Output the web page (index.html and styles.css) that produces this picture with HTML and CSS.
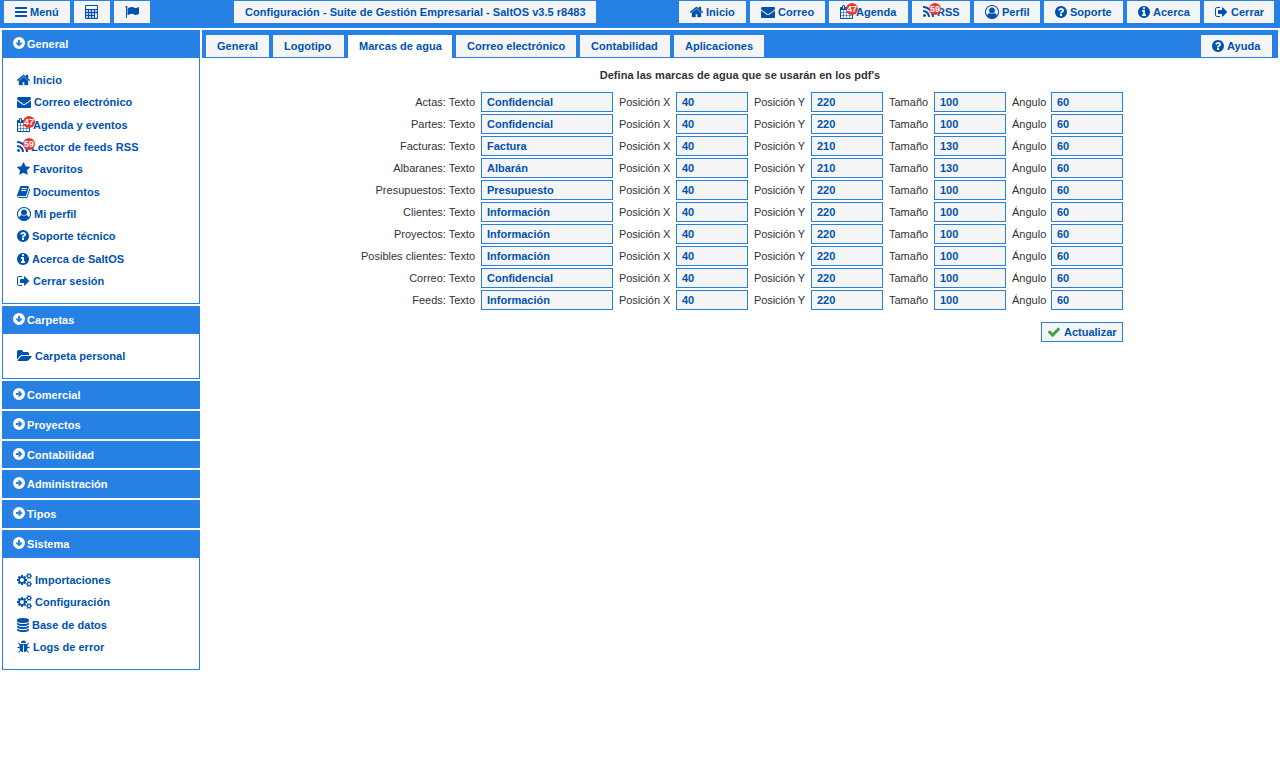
FILE: index.html
```html
<!DOCTYPE html>
<html lang="es">
<head>
<meta charset="utf-8">
<title>Configuración - SaltOS</title>
<link rel="stylesheet" href="styles.css">
</head>
<body>
<svg class="sprite" aria-hidden="true">
<symbol id="bars" viewBox="128 0 1536 1792"><path d="M1664 1344v128q0 26-19 45t-45 19h-1408q-26 0-45-19t-19-45v-128q0-26 19-45t45-19h1408q26 0 45 19t19 45zm0-512v128q0 26-19 45t-45 19h-1408q-26 0-45-19t-19-45v-128q0-26 19-45t45-19h1408q26 0 45 19t19 45zm0-512v128q0 26-19 45t-45 19h-1408q-26 0-45-19t-19-45v-128q0-26 19-45t45-19h1408q26 0 45 19t19 45z"/></symbol>
<symbol id="calc" viewBox="64 0 1664 1792"><path fill-rule="evenodd" d="M192 0h1408q52 0 90 38t38 90v1536q0 52-38 90t-90 38h-1408q-52 0-90-38t-38-90v-1536q0-52 38-90t90-38zM256 128h1280q26 0 45 19t19 45v256q0 26-19 45t-45 19h-1280q-26 0-45-19t-19-45v-256q0-26 19-45t45-19zM192 768a128 128 0 1 0 256 0a128 128 0 1 0-256 0zm384 0a128 128 0 1 0 256 0a128 128 0 1 0-256 0zm384 0a128 128 0 1 0 256 0a128 128 0 1 0-256 0zm384 0a128 128 0 1 0 256 0a128 128 0 1 0-256 0zM192 1152a128 128 0 1 0 256 0a128 128 0 1 0-256 0zm384 0a128 128 0 1 0 256 0a128 128 0 1 0-256 0zm384 0a128 128 0 1 0 256 0a128 128 0 1 0-256 0zM192 1536a128 128 0 1 0 256 0a128 128 0 1 0-256 0zm384 0a128 128 0 1 0 256 0a128 128 0 1 0-256 0zm384 0a128 128 0 1 0 256 0a128 128 0 1 0-256 0zM1344 1152a128 128 0 0 1 256 0v384a128 128 0 0 1-256 0z"/></symbol>
<symbol id="flag" viewBox="0 0 1792 1792"><path d="M320 256q0 72-64 110v1266q0 13-9.5 22.5t-22.5 9.5h-64q-13 0-22.5-9.5t-9.5-22.5v-1266q-64-38-64-110 0-53 37.5-90.5t90.5-37.5 90.5 37.5 37.5 90.5zm1472 64v763q0 25-12.5 38.5t-39.5 27.5q-215 116-369 116-61 0-123.5-22t-108.5-48-115.5-48-142.5-22q-192 0-464 146-17 9-33 9-26 0-45-19t-19-45v-742q0-32 31-55 21-14 79-43 236-120 421-120 107 0 200 29t219 88q38 19 88 19 54 0 117.5-21t110-47 88-47 54.5-21q26 0 45 19t19 45z"/></symbol>
<symbol id="home" viewBox="64 0 1664 1792"><path stroke="currentColor" stroke-width="50" d="M1472 992v480q0 26-19 45t-45 19h-384v-384h-256v384h-384q-26 0-45-19t-19-45v-480q0-1 .5-3t.5-3l575-474 575 474q1 2 1 6zm223-69l-62 74q-8 9-21 11h-3q-13 0-21-7l-692-577-692 577q-12 8-24 7-13-2-21-11l-62-74q-8-10-7-23.5t11-21.5l719-599q32-26 76-26t76 26l244 204v-195q0-14 9-23t23-9h192q14 0 23 9t9 23v408l219 182q10 8 11 21.5t-7 23.5z"/></symbol>
<symbol id="mail" viewBox="0 0 1792 1792"><path d="M1792 710v794q0 66-47 113t-113 47h-1472q-66 0-113-47t-47-113v-794q44 49 101 87 362 246 497 345 57 42 92.5 65.5t94.5 48 110 24.5h2q51 0 110-24.5t94.5-48 92.5-65.5q170-123 498-345 57-39 100-87zm0-294q0 79-49 151t-122 123q-376 261-468 325-10 7-42.5 31t-54 38.5-52 32.5-57.5 27-50 9h-2q-23 0-50-9t-57.5-27-52-32.5-54-38.5-42.5-31q-91-64-262-182.5t-205-142.5q-62-42-117-115.5t-55-136.5q0-78 41.5-130t118.5-52h1472q65 0 112.5 47t47.5 113z"/></symbol>
<symbol id="cal" viewBox="64 0 1664 1792"><path d="M192 1664h288v-288h-288v288zm352 0h320v-288h-320v288zm-352-352h288v-320h-288v320zm352 0h320v-320h-320v320zm-352-384h288v-288h-288v288zm736 736h320v-288h-320v288zm-384-736h320v-288h-320v288zm768 736h288v-288h-288v288zm-384-352h320v-320h-320v320zm-352-864v-288q0-13-9.5-22.5t-22.5-9.5h-64q-13 0-22.5 9.5t-9.5 22.5v288q0 13 9.5 22.5t22.5 9.5h64q13 0 22.5-9.5t9.5-22.5zm736 864h288v-320h-288v320zm-384-384h320v-288h-320v288zm384 0h288v-288h-288v288zm32-480v-288q0-13-9.5-22.5t-22.5-9.5h-64q-13 0-22.5 9.5t-9.5 22.5v288q0 13 9.5 22.5t22.5 9.5h64q13 0 22.5-9.5t9.5-22.5zm384-64v1280q0 52-38 90t-90 38h-1408q-52 0-90-38t-38-90v-1280q0-52 38-90t90-38h128v-96q0-66 47-113t113-47h64q66 0 113 47t47 113v96h384v-96q0-66 47-113t113-47h64q66 0 113 47t47 113v96h128q52 0 90 38t38 90z"/></symbol>
<symbol id="rss" viewBox="192 0 1408 1792"><path d="M576 1344q0 80-56 136t-136 56-136-56-56-136 56-136 136-56 136 56 56 136zm512 123q2 28-17 48-18 21-47 21h-135q-25 0-43-16.5t-20-41.5q-22-229-184.5-391.5t-391.5-184.5q-25-2-41.5-20t-16.5-43v-135q0-29 21-47 17-17 43-17h5q160 13 306 80.5t259 181.5q114 113 181.5 259t80.5 306zm512 2q2 27-18 47-18 20-46 20h-143q-26 0-44.5-17.5t-19.5-42.5q-12-215-101-408.5t-231.5-336-336-231.5-408.5-102q-25-1-42.5-19.5t-17.5-43.5v-143q0-28 20-46 18-18 44-18h3q262 13 501.5 120t425.5 294q187 186 294 425.5t120 501.5z"/></symbol>
<symbol id="star" viewBox="64 0 1664 1792"><path d="M1728 647q0 22-26 48l-363 354 86 500q1 7 1 20 0 21-10.5 35.5t-30.5 14.5q-19 0-40-12l-449-236-449 236q-22 12-40 12-21 0-31.5-14.5t-10.5-35.5q0-6 2-20l86-500-364-354q-25-27-25-48 0-37 56-46l502-73 225-455q19-41 49-41t49 41l225 455 502 73q56 9 56 46z"/></symbol>
<symbol id="book" viewBox="64 0 1664 1792"><path d="M1703 478q40 57 18 129l-275 906q-19 64-76.5 107.5t-122.5 43.5h-923q-77 0-148.5-53.5t-99.5-131.5q-24-67-2-127 0-4 3-27t4-37q1-8-3-21.5t-3-19.5q2-11 8-21t16.5-23.5 16.5-23.5q23-38 45-91.5t30-91.5q3-10 .5-30t-.5-28q3-11 17-28t17-23q21-36 42-92t25-90q1-9-2.5-32t.5-28q4-13 22-30.5t22-22.5q19-26 42.5-84.5t27.5-96.5q1-8-3-25.5t-2-26.5q2-8 9-18t18-23 17-21q8-12 16.5-30.5t15-35 16-36 19.5-32 26.5-23.5 36-11.5 47.5 5.5l-1 3q38-9 51-9h761q74 0 114 56t18 130l-274 906q-36 119-71.5 153.5t-128.5 34.5h-869q-27 0-38 15-11 16-1 43 24 70 144 70h923q29 0 56-15.5t35-41.5l300-987q7-22 5-57 38 15 59 43zm-1064 2q-4 13 2 22.5t20 9.5h608q13 0 25.5-9.5t16.5-22.5l21-64q4-13-2-22.5t-20-9.5h-608q-13 0-25.5 9.5t-16.5 22.5zm-83 256q-4 13 2 22.5t20 9.5h608q13 0 25.5-9.5t16.5-22.5l21-64q4-13-2-22.5t-20-9.5h-608q-13 0-25.5 9.5t-16.5 22.5z"/></symbol>
<symbol id="user" viewBox="0 0 1792 1792"><path d="M896 0q182 0 348 71t286 191 191 286 71 348q0 181-70.5 347t-190.5 286-286 191.5-349 71.5-349-71-285.5-191.5-190.5-286-71-347.5 71-348 191-286 286-191 348-71zm619 1351q149-205 149-455 0-156-61-298t-164-245-245-164-298-61-298 61-245 164-164 245-61 298q0 250 149 455 66-327 306-327 131 128 313 128t313-128q240 0 306 327zm-235-647q0-159-112.5-271.5t-271.5-112.5-271.5 112.5-112.5 271.5 112.5 271.5 271.5 112.5 271.5-112.5 112.5-271.5z"/></symbol>
<symbol id="help" viewBox="128 0 1536 1792"><path d="M1024 1376v-192q0-14-9-23t-23-9h-192q-14 0-23 9t-9 23v192q0 14 9 23t23 9h192q14 0 23-9t9-23zm256-672q0-88-55.5-163t-138.5-116-170-41q-243 0-371 213-15 24 8 42l132 100q7 6 19 6 16 0 25-12 53-68 86-92 34-24 86-24 48 0 85.5 26t37.5 59q0 38-20 61t-68 45q-63 28-115.5 86.5t-52.5 125.5v36q0 14 9 23t23 9h192q14 0 23-9t9-23q0-19 21.5-49.5t54.5-49.5q32-18 49-28.5t46-35 44.5-48 28-60.5 12.5-81zm384 192q0 209-103 385.5t-279.5 279.5-385.5 103-385.5-103-279.5-279.5-103-385.5 103-385.5 279.5-279.5 385.5-103 385.5 103 279.5 279.5 103 385.5z"/></symbol>
<symbol id="info" viewBox="128 0 1536 1792"><path d="M1152 1376v-160q0-14-9-23t-23-9h-96v-512q0-14-9-23t-23-9h-320q-14 0-23 9t-9 23v160q0 14 9 23t23 9h96v320h-96q-14 0-23 9t-9 23v160q0 14 9 23t23 9h448q14 0 23-9t9-23zm-128-896v-160q0-14-9-23t-23-9h-192q-14 0-23 9t-9 23v160q0 14 9 23t23 9h192q14 0 23-9t9-23zm640 416q0 209-103 385.5t-279.5 279.5-385.5 103-385.5-103-279.5-279.5-103-385.5 103-385.5 279.5-279.5 385.5-103 385.5 103 279.5 279.5 103 385.5z"/></symbol>
<symbol id="out" viewBox="64 0 1664 1792"><path d="M704 1440q0 4 1 20t.5 26.5-3 23.5-10 19.5-20.5 6.5h-320q-119 0-203.5-84.5t-84.5-203.5v-704q0-119 84.5-203.5t203.5-84.5h320q13 0 22.5 9.5t9.5 22.5q0 4 1 20t.5 26.5-3 23.5-10 19.5-20.5 6.5h-320q-66 0-113 47t-47 113v704q0 66 47 113t113 47h312l11.5 1 11.5 3 8 5.5 7 9 2 13.5zm928-544q0 26-19 45l-544 544q-19 19-45 19t-45-19-19-45v-288h-448q-26 0-45-19t-19-45v-384q0-26 19-45t45-19h448v-288q0-26 19-45t45-19 45 19l544 544q19 19 19 45z"/></symbol>
<symbol id="folder" viewBox="-64 0 1920 1792"><path d="M1815 952q0 31-31 66l-336 396q-43 51-120.5 86.5t-143.5 35.5h-1088q-34 0-60.5-13t-26.5-43q0-31 31-66l336-396q43-51 120.5-86.5t143.5-35.5h1088q34 0 60.5 13t26.5 43zm-343-344v160h-832q-94 0-197 47.5t-164 119.5l-337 396-5 6q0-4-.5-12.5t-.5-12.5v-960q0-92 66-158t158-66h320q92 0 158 66t66 158v32h544q92 0 158 66t66 158z"/></symbol>
<symbol id="down" viewBox="128 0 1536 1792"><path fill-rule="evenodd" d="M128 896a768 768 0 1 0 1536 0a768 768 0 1 0-1536 0zM768 512h256v320h256v128l-384 384l-384-384v-128h256z"/></symbol>
<symbol id="right" viewBox="128 0 1536 1792"><path fill-rule="evenodd" d="M128 896a768 768 0 1 0 1536 0a768 768 0 1 0-1536 0zM512 768v256h320v256h128l384-384l-384-384h-128v256z"/></symbol>
<symbol id="cogs" viewBox="-64 0 1920 1792"><path d="M832 896q0-106-75-181t-181-75-181 75-75 181 75 181 181 75 181-75 75-181zm768 512q0-52-38-90t-90-38-90 38-38 90q0 53 37.5 90.5t90.5 37.5 90.5-37.5 37.5-90.5zm0-1024q0-52-38-90t-90-38-90 38-38 90q0 53 37.5 90.5t90.5 37.5 90.5-37.5 37.5-90.5zm-384 421v185q0 10-7 19.5t-16 10.5l-155 24q-11 35-32 76 34 48 90 115 7 11 7 20 0 12-7 19-23 30-82.5 89.5t-78.5 59.5q-11 0-21-7l-115-90q-37 19-77 31-11 108-23 155-7 24-30 24h-186q-11 0-20-7.5t-10-17.5l-23-153q-34-10-75-31l-118 89q-7 7-20 7-11 0-21-8-144-133-144-160 0-9 7-19 10-14 41-53t47-61q-23-44-35-82l-152-24q-10-1-17-9.5t-7-19.5v-185q0-10 7-19.5t16-10.5l155-24q11-35 32-76-34-48-90-115-7-11-7-20 0-12 7-20 22-30 82-89t79-59q11 0 21 7l115 90q34-18 77-32 11-108 23-154 7-24 30-24h186q11 0 20 7.5t10 17.5l23 153q34 10 75 31l118-89q8-7 20-7 11 0 21 8 144 133 144 160 0 8-7 19-12 16-42 54t-45 60q23 48 34 82l152 23q10 2 17 10.5t7 19.5zm640 533v140q0 16-149 31-12 27-30 52 51 113 51 138 0 4-4 7-122 71-124 71-8 0-46-47t-52-68q-20 2-30 2t-30-2q-14 21-52 68t-46 47q-2 0-124-71-4-3-4-7 0-25 51-138-18-25-30-52-149-15-149-31v-140q0-16 149-31 13-29 30-52-51-113-51-138 0-4 4-7 4-2 35-20t59-34 30-16q8 0 46 46.5t52 67.5q20-2 30-2t30 2q51-71 92-112l6-2q4 0 124 70 4 3 4 7 0 25-51 138 17 23 30 52 149 15 149 31zm0-1024v140q0 16-149 31-12 27-30 52 51 113 51 138 0 4-4 7-122 71-124 71-8 0-46-47t-52-68q-20 2-30 2t-30-2q-14 21-52 68t-46 47q-2 0-124-71-4-3-4-7 0-25 51-138-18-25-30-52-149-15-149-31v-140q0-16 149-31 13-29 30-52-51-113-51-138 0-4 4-7 4-2 35-20t59-34 30-16q8 0 46 46.5t52 67.5q20-2 30-2t30 2q51-71 92-112l6-2q4 0 124 70 4 3 4 7 0 25-51 138 17 23 30 52 149 15 149 31z"/></symbol>
<symbol id="db" viewBox="128 0 1536 1792"><path d="M896 768q237 0 443-43t325-127v170q0 69-103 128t-280 93.5-385 34.5-385-34.5-280-93.5-103-128v-170q119 84 325 127t443 43zm0 768q237 0 443-43t325-127v170q0 69-103 128t-280 93.5-385 34.5-385-34.5-280-93.5-103-128v-170q119 84 325 127t443 43zm0-384q237 0 443-43t325-127v170q0 69-103 128t-280 93.5-385 34.5-385-34.5-280-93.5-103-128v-170q119 84 325 127t443 43zm0-1152q208 0 385 34.5t280 93.5 103 128v128q0 69-103 128t-280 93.5-385 34.5-385-34.5-280-93.5-103-128v-128q0-69 103-128t280-93.5 385-34.5z"/></symbol>
<symbol id="bug" viewBox="64 0 1664 1792"><path d="M1696 960q0 26-19 45t-45 19h-224q0 171-67 290l208 209q19 19 19 45t-19 45q-18 19-45 19t-45-19l-198-197q-5 5-15 13t-42 28.5-65 36.5-82 29-97 13v-896h-128v896q-51 0-101.5-13.5t-87-33-66-39-43.5-32.5l-15-14-183 207q-20 21-48 21-24 0-43-16-19-18-20.5-44.5t15.5-46.5l202-227q-58-114-58-274h-224q-26 0-45-19t-19-45 19-45 45-19h224v-294l-173-173q-19-19-19-45t19-45 45-19 45 19l173 173h844l173-173q19-19 45-19t45 19 19 45-19 45l-173 173v294h224q26 0 45 19t19 45zm-480-576h-640q0-133 93.5-226.5t226.5-93.5 226.5 93.5 93.5 226.5z"/></symbol>
<symbol id="check" viewBox="0 0 1792 1792"><path d="M1671 566q0 40-28 68l-724 724-136 136q-28 28-68 28t-68-28l-136-136-362-362q-28-28-28-68t28-68l136-136q28-28 68-28t68 28l294 295 656-657q28-28 68-28t68 28l136 136q28 28 28 68z"/></symbol>
</svg>

<header class="topbar">
  <a class="btn b66"><svg class="ic w12"><use href="#bars"/></svg>Menú</a>
  <a class="btn b36"><svg class="ic w13"><use href="#calc"/></svg></a>
  <a class="btn b36"><svg class="ic w14"><use href="#flag"/></svg></a>
  <a class="btn title">Configuración - Suite de Gestión Empresarial - SaltOS v3.5 r8483</a>
  <a class="btn push b67"><svg class="ic w13"><use href="#home"/></svg>Inicio</a>
  <a class="btn b75"><svg class="ic w14"><use href="#mail"/></svg>Correo</a>
  <a class="btn b79"><span class="has"><svg class="ic w13"><use href="#cal"/></svg><b class="badge">47</b></span>Agenda</a>
  <a class="btn b58"><span class="has"><svg class="ic w11"><use href="#rss"/></svg><b class="badge">59</b></span>RSS</a>
  <a class="btn b66"><svg class="ic w14"><use href="#user"/></svg>Perfil</a>
  <a class="btn b79"><svg class="ic w12"><use href="#help"/></svg>Soporte</a>
  <a class="btn b73"><svg class="ic w12"><use href="#info"/></svg>Acerca</a>
  <a class="btn b70"><svg class="ic w13"><use href="#out"/></svg>Cerrar</a>
</header>

<div class="page">
<nav class="side">
  <h3 class="head"><svg class="ic w12"><use href="#down"/></svg>General</h3>
  <ul class="menu">
    <li><svg class="ic w13"><use href="#home"/></svg>Inicio</li>
    <li><svg class="ic w14"><use href="#mail"/></svg>Correo electrónico</li>
    <li><span class="has"><svg class="ic w13"><use href="#cal"/></svg><b class="badge">47</b></span>Agenda y eventos</li>
    <li><span class="has"><svg class="ic w11"><use href="#rss"/></svg><b class="badge">59</b></span>Lector de feeds RSS</li>
    <li><svg class="ic w13"><use href="#star"/></svg>Favoritos</li>
    <li><svg class="ic w13"><use href="#book"/></svg>Documentos</li>
    <li><svg class="ic w14"><use href="#user"/></svg>Mi perfil</li>
    <li><svg class="ic w12"><use href="#help"/></svg>Soporte técnico</li>
    <li><svg class="ic w12"><use href="#info"/></svg>Acerca de SaltOS</li>
    <li><svg class="ic w13"><use href="#out"/></svg>Cerrar sesión</li>
  </ul>
  <h3 class="head"><svg class="ic w12"><use href="#down"/></svg>Carpetas</h3>
  <ul class="menu">
    <li><svg class="ic w15"><use href="#folder"/></svg>Carpeta personal</li>
  </ul>
  <h3 class="head closed"><svg class="ic w12"><use href="#right"/></svg>Comercial</h3>
  <h3 class="head closed"><svg class="ic w12"><use href="#right"/></svg>Proyectos</h3>
  <h3 class="head closed"><svg class="ic w12"><use href="#right"/></svg>Contabilidad</h3>
  <h3 class="head closed"><svg class="ic w12"><use href="#right"/></svg>Administración</h3>
  <h3 class="head closed"><svg class="ic w12"><use href="#right"/></svg>Tipos</h3>
  <h3 class="head"><svg class="ic w12"><use href="#down"/></svg>Sistema</h3>
  <ul class="menu">
    <li><svg class="ic w15"><use href="#cogs"/></svg>Importaciones</li>
    <li><svg class="ic w15"><use href="#cogs"/></svg>Configuración</li>
    <li><svg class="ic w12"><use href="#db"/></svg>Base de datos</li>
    <li><svg class="ic w13"><use href="#bug"/></svg>Logs de error</li>
  </ul>
</nav>

<main class="main">
  <div class="tabs">
    <a class="btn b63">General</a>
    <a class="btn b71">Logotipo</a>
    <a class="btn b104 active">Marcas de agua</a>
    <a class="btn b120">Correo electrónico</a>
    <a class="btn b90">Contabilidad</a>
    <a class="btn b90">Aplicaciones</a>
    <a class="btn b71 push"><svg class="ic w12"><use href="#help"/></svg>Ayuda</a>
  </div>
  <h2 class="caption">Defina las marcas de agua que se usarán en los pdf's</h2>
  <form class="form">
    <label>Actas: Texto</label><input value="Confidencial"><label class="pos">Posición X</label><input value="40"><label class="pos">Posición Y</label><input value="220"><label>Tamaño</label><input value="100"><label>Ángulo</label><input value="60">
    <label>Partes: Texto</label><input value="Confidencial"><label class="pos">Posición X</label><input value="40"><label class="pos">Posición Y</label><input value="220"><label>Tamaño</label><input value="100"><label>Ángulo</label><input value="60">
    <label>Facturas: Texto</label><input value="Factura"><label class="pos">Posición X</label><input value="40"><label class="pos">Posición Y</label><input value="210"><label>Tamaño</label><input value="130"><label>Ángulo</label><input value="60">
    <label>Albaranes: Texto</label><input value="Albarán"><label class="pos">Posición X</label><input value="40"><label class="pos">Posición Y</label><input value="210"><label>Tamaño</label><input value="130"><label>Ángulo</label><input value="60">
    <label>Presupuestos: Texto</label><input value="Presupuesto"><label class="pos">Posición X</label><input value="40"><label class="pos">Posición Y</label><input value="220"><label>Tamaño</label><input value="100"><label>Ángulo</label><input value="60">
    <label>Clientes: Texto</label><input value="Información"><label class="pos">Posición X</label><input value="40"><label class="pos">Posición Y</label><input value="220"><label>Tamaño</label><input value="100"><label>Ángulo</label><input value="60">
    <label>Proyectos: Texto</label><input value="Información"><label class="pos">Posición X</label><input value="40"><label class="pos">Posición Y</label><input value="220"><label>Tamaño</label><input value="100"><label>Ángulo</label><input value="60">
    <label>Posibles clientes: Texto</label><input value="Información"><label class="pos">Posición X</label><input value="40"><label class="pos">Posición Y</label><input value="220"><label>Tamaño</label><input value="100"><label>Ángulo</label><input value="60">
    <label>Correo: Texto</label><input value="Confidencial"><label class="pos">Posición X</label><input value="40"><label class="pos">Posición Y</label><input value="220"><label>Tamaño</label><input value="100"><label>Ángulo</label><input value="60">
    <label>Feeds: Texto</label><input value="Información"><label class="pos">Posición X</label><input value="40"><label class="pos">Posición Y</label><input value="220"><label>Tamaño</label><input value="100"><label>Ángulo</label><input value="60">
    <button class="update" type="button"><svg class="ic w14 ok"><use href="#check"/></svg>Actualizar</button>
  </form>
</main>
</div>
</body>
</html>
```
FILE: styles.css
```css
* { box-sizing: border-box; }
body {
  margin: 0;
  background: #fff;
  color: #333;
  font: 11px/14px "Liberation Sans", Arial, sans-serif;
}
.sprite { display: none; }

.ic {
  width: 14px;
  height: 14px;
  margin-right: 3px;
  vertical-align: -3px;
  fill: currentColor;
  overflow: visible;
}
.w11 { width: 11px; }
.w12 { width: 12px; }
.w13 { width: 13px; }
.w15 { width: 15px; }

.has { position: relative; }
.badge {
  position: absolute;
  left: 6px;
  top: -3px;
  width: 12px;
  height: 12px;
  border-radius: 50%;
  background: #e53935;
  color: #fff;
  font-size: 9px;
  line-height: 12px;
  letter-spacing: 0;
  text-align: center;
}

.topbar {
  display: flex;
  align-items: flex-start;
  gap: 4px;
  height: 28px;
  padding: 1px 6px 0 4px;
  background: #2780e3;
}
.btn {
  height: 22px;
  padding: 0 0 0 11px;
  background: #f5f5f5;
  color: #0052b0;
  font-weight: bold;
  line-height: 22px;
  letter-spacing: 0.02px;
  white-space: nowrap;
}
.b36 { width: 36px; }
.b58 { width: 58px; }
.b63 { width: 63px; }
.b66 { width: 66px; }
.b67 { width: 67px; }
.b70 { width: 70px; }
.b71 { width: 71px; }
.b73 { width: 73px; }
.b75 { width: 75px; }
.b79 { width: 79px; }
.b90 { width: 90px; }
.b104 { width: 104px; }
.b120 { width: 120px; }
.title { width: 362px; margin-left: 80px; }
.push { margin-left: auto; }

.page {
  display: flex;
  gap: 2px;
  padding: 2px 2px 0;
}
.side { width: 198px; }
.head {
  height: 27.8px;
  margin: 0;
  padding-left: 11px;
  background: #2780e3;
  color: #fff;
  font-size: 11px;
  line-height: 28px;
  letter-spacing: 0.04px;
}
.head .ic { margin-right: 2px; vertical-align: -2px; }
.closed { margin-bottom: 2px; }
.menu {
  margin: 0 0 2px;
  padding: 11.33px 14px 10.57px;
  border: 1px solid #2780e3;
  border-top: 0;
  list-style: none;
  color: #0052b0;
  font-weight: bold;
  letter-spacing: 0.03px;
}
.menu li {
  height: 22.33px;
  line-height: 22.33px;
}

.main { flex: 1; }
.tabs {
  display: flex;
  gap: 4px;
  height: 28px;
  padding: 5px 6px 0 4px;
  background: #2780e3;
}
.tabs .active { height: 23px; background: #fff; }
.caption {
  margin: 10px 0;
  font-size: 11px;
  letter-spacing: 0.03px;
  text-align: center;
}
.form {
  display: grid;
  grid-template-columns: 114px 132px 51px 72px 51px 72px 39px 72px 33px 72px;
  gap: 2px 6px;
  margin-left: 159px;
}
.form label {
  line-height: 20px;
  text-align: right;
  white-space: nowrap;
}
.form .pos { letter-spacing: -0.08px; }
.form input,
.update {
  width: 100%;
  height: 20px;
  padding: 0 5px;
  border: 1px solid #2780e3;
  border-radius: 0;
  background: #f5f5f5;
  color: #0052b0;
  font: bold 11px "Liberation Sans", Arial, sans-serif;
}
.update {
  grid-column: 9 / 11;
  justify-self: end;
  width: 82px;
  margin-top: 10px;
  text-align: left;
  white-space: nowrap;
}
.ok { fill: #43a047; }
```
